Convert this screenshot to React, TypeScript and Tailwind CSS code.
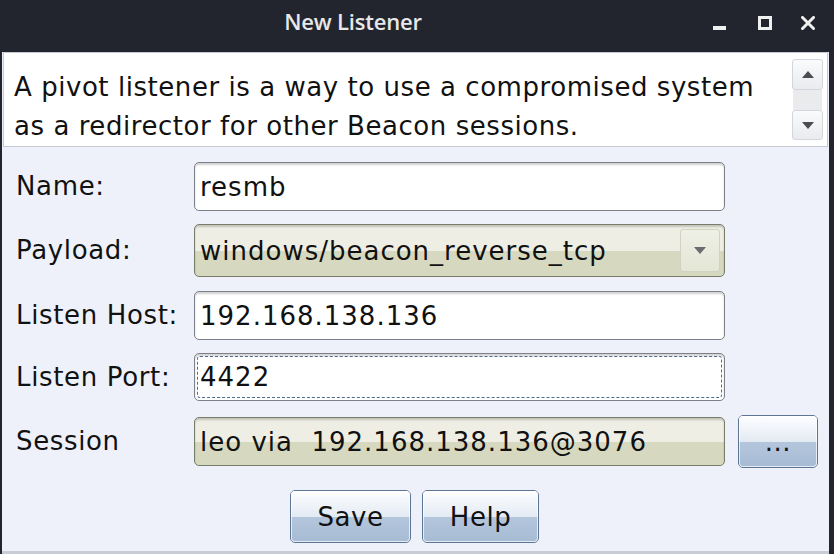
import React from "react";

const font = { fontFamily: '"DejaVu Sans", "Liberation Sans", sans-serif' };

function Field({
  value,
  variant = "text",
  h = "h-[48px]",
}: {
  value: string;
  variant?: "text" | "combo" | "focus" | "olive";
  h?: string;
}) {
  const olive = variant === "combo" || variant === "olive";
  return (
    <div
      className={`relative w-[531px] ${h} rounded-[5px] border ${
        olive
          ? "bg-gradient-to-b from-[#eeeee4] from-50% to-[#d6d9bf] to-50% border-[#787d6a]"
          : "bg-white border-[#7c8088]"
      } shadow-[inset_0_2px_2px_rgba(0,0,0,0.18)] flex items-center pl-[5px]`}
    >
      {variant === "focus" && (
        <div className="absolute inset-[2px] border border-dashed border-[#4f6b90] rounded-[3px]" />
      )}
      <span className="text-[26px] tracking-[1px] text-[#111] leading-none relative whitespace-pre">{value}</span>
      {variant === "combo" && (
        <div className="absolute right-[4px] top-[4px] bottom-[4px] w-[40px] border border-[#d0d3bf] rounded-[3px] bg-gradient-to-b from-[#eff0e6] to-[#e4e6d6] flex items-center justify-center">
          <svg width="12" height="7" viewBox="0 0 12 7">
            <path d="M0 0 L12 0 L6 7 Z" fill="#6a6c70" />
          </svg>
        </div>
      )}
    </div>
  );
}

function NimbusButton({ label, w, h }: { label: string; w: string; h: string }) {
  return (
    <div
      className={`${w} ${h} rounded-[5px] border border-[#5d7694] flex items-center justify-center overflow-hidden relative`}
    >
      <div className="absolute inset-x-0 bottom-0 h-1/2 bg-gradient-to-b from-[#b4c6dc] to-[#a6bbd4]" />
      <div className="absolute inset-x-0 top-0 h-1/2 bg-gradient-to-b from-[#fdfeff] to-[#e3eaf3]" />
      <div className="absolute inset-0 rounded-[4px] shadow-[inset_0_0_0_1px_rgba(255,255,255,0.7)]" />
      <span className="relative text-[26px] tracking-[0.5px] text-[#111] leading-none">{label}</span>
    </div>
  );
}

export default function App() {
  return (
    <div className="w-[834px] h-[554px] bg-[#22252e] flex flex-col overflow-hidden" style={font}>
      {/* Title bar */}
      <div className="h-[52px] relative flex items-center justify-center shrink-0 pr-[128px] pb-[9px]">
        <span
          className="text-[22px] font-semibold text-[#e8e8ea] tracking-[-0.2px]"
          style={{ fontFamily: '"Open Sans", "Noto Sans", sans-serif' }}
        >
          New Listener
        </span>
        <div className="absolute right-[19px] top-0 h-full flex items-center pb-[6px]">
          <div className="w-[13px] h-[14px] flex items-end">
            <div className="w-[13px] h-[4px] bg-[#f0f0f0]" />
          </div>
          <div className="ml-[32px] w-[14px] h-[14px] border-[3px] border-[#f0f0f0]" />
          <svg className="ml-[29px]" width="14" height="14" viewBox="0 0 14 14">
            <path d="M1.5 1.5 L12.5 12.5 M12.5 1.5 L1.5 12.5" stroke="#f0f0f0" strokeWidth="3" strokeLinecap="square" />
          </svg>
        </div>
      </div>

      {/* Body */}
      <div className="flex-1 ml-[2px] mr-[5px] bg-[#eef1f9] border-b-[3px] border-[#c9ccd4] flex flex-col">
        {/* Description text area */}
        <div className="ml-[1px] mr-[1px] h-[95px] border border-[#c6cad2] bg-white flex">
          <div className="flex-1 pl-[10px] pt-[15px] text-[26px] leading-[39px] text-[#111] tracking-[0.55px]">
            A pivot listener is a way to use a compromised system
            <br />
            as a redirector for other Beacon sessions.
          </div>
          <div className="w-[31px] mr-[4px] py-[6px] flex flex-col">
            <div className="h-[31px] rounded-[3px] border border-[#d3d6dc] bg-gradient-to-b from-[#fafbfc] to-[#e9ebee] flex items-center justify-center">
              <svg width="12" height="7" viewBox="0 0 12 7">
                <path d="M0 7 L12 7 L6 0 Z" fill="#4a4c50" />
              </svg>
            </div>
            <div className="flex-1 bg-[#eaebed] mx-[1px]" />
            <div className="h-[30px] rounded-[3px] border border-[#d3d6dc] bg-gradient-to-b from-[#fafbfc] to-[#e9ebee] flex items-center justify-center">
              <svg width="12" height="7" viewBox="0 0 12 7">
                <path d="M0 0 L12 0 L6 7 Z" fill="#4a4c50" />
              </svg>
            </div>
          </div>
        </div>

        {/* Form */}
        <div className="mt-[15px] flex flex-col text-[26px] tracking-[0.65px] text-[#111]">
          <div className="flex items-center">
            <div className="w-[192px] pl-[14px]">Name:</div>
            <Field value="resmb" h="h-[49px]" />
          </div>
          <div className="flex items-center mt-[13px]">
            <div className="w-[192px] pl-[14px]">Payload:</div>
            <Field value="windows/beacon_reverse_tcp" variant="combo" h="h-[53px]" />
          </div>
          <div className="flex items-center mt-[14px]">
            <div className="w-[192px] pl-[14px]">Listen Host:</div>
            <Field value="192.168.138.136" h="h-[49px]" />
          </div>
          <div className="flex items-center mt-[13px]">
            <div className="w-[192px] pl-[14px]">Listen Port:</div>
            <Field value="4422" variant="focus" h="h-[48px]" />
          </div>
          <div className="flex items-center mt-[14px]">
            <div className="w-[192px] pl-[14px]">Session</div>
            <Field value="leo via  192.168.138.136@3076" variant="olive" h="h-[49px]" />
            <div className="ml-[13px]">
              <NimbusButton label="..." w="w-[80px]" h="h-[53px]" />
            </div>
          </div>
        </div>

        {/* Buttons */}
        <div className="mt-[22px] flex justify-center gap-[11px] pr-[2px]">
          <NimbusButton label="Save" w="w-[121px]" h="h-[53px]" />
          <NimbusButton label="Help" w="w-[117px]" h="h-[53px]" />
        </div>
      </div>
    </div>
  );
}
